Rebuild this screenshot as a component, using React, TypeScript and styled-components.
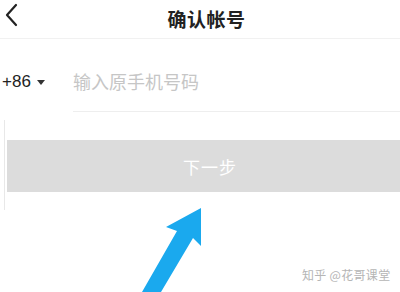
import styled, { createGlobalStyle } from 'styled-components';

const Global = createGlobalStyle`
  html, body {
    margin: 0;
    padding: 0;
    background: #fff;
    overflow: hidden;
  }
  body {
    font-family: "Noto Sans CJK SC", "Noto Sans", sans-serif;
  }
`;

const Page = styled.div`
  position: relative;
  width: 413px;
  height: 292px;
  overflow: hidden;
  background: #fff;
`;

const Header = styled.header`
  position: relative;
  height: 38px;
  display: flex;
  align-items: center;
  justify-content: center;
  border-bottom: 1px solid #f1f1f1;
`;

const Back = styled.button`
  position: absolute;
  left: 3px;
  top: 3px;
  border: 0;
  padding: 0;
  background: none;
  display: flex;
`;

const Title = styled.h1`
  margin: 0;
  margin-top: -2px;
  font-size: 19px;
  font-weight: 700;
  color: #222;
  letter-spacing: 0.5px;
`;

const PhoneRow = styled.div`
  height: 73px;
  display: flex;
  align-items: center;
  padding-top: 12px;
  box-sizing: border-box;
`;

const Code = styled.div`
  width: 73px;
  flex: none;
  display: flex;
  align-items: center;
  gap: 6px;
  padding-left: 2px;
  box-sizing: border-box;
  font-family: "Liberation Sans", Arial, sans-serif;
  font-size: 17px;
  color: #222;
`;

const Caret = styled.span`
  width: 0;
  height: 0;
  border-left: 4.5px solid transparent;
  border-right: 4.5px solid transparent;
  border-top: 5px solid #333;
  margin-top: 2px;
`;

const Field = styled.div`
  flex: 1;
  align-self: stretch;
  display: flex;
  align-items: center;
  border-bottom: 1px solid #eeeeee;
  font-size: 18px;
  color: #c6c6c6;
`;

const ButtonRow = styled.div`
  display: flex;
  padding-top: 22px;
  padding-left: 4px;
  gap: 2px;
`;

const Rail = styled.span`
  width: 1px;
  margin-top: -14px;
  height: 90px;
  background: #e8e8e8;
`;

const NextButton = styled.button`
  flex: 1;
  height: 52px;
  margin-top: 6px;
  border: 0;
  background: #dcdcdc;
  color: #fff;
  font-family: "Noto Sans CJK SC", sans-serif;
  font-size: 17px;
  letter-spacing: 1px;
`;

const Arrow = styled.svg`
  position: absolute;
  left: 0;
  top: 0;
  pointer-events: none;
`;

const Watermark = styled.div`
  position: absolute;
  left: 302px;
  top: 266px;
  font-size: 12px;
  letter-spacing: 0.3px;
  color: #b5b5b5;
  text-shadow: 0 0 1px #fff;
  white-space: nowrap;
`;

export default function App() {
  return (
    <Page>
      <Global />
      <Header>
        <Back aria-label="返回">
          <svg width="16" height="24" viewBox="0 0 16 24">
            <path d="M13 2 L4 12 L13 22" fill="none" stroke="#222" strokeWidth="2.2" strokeLinecap="round" strokeLinejoin="round" />
          </svg>
        </Back>
        <Title>确认帐号</Title>
      </Header>
      <PhoneRow>
        <Code>
          +86
          <Caret />
        </Code>
        <Field>输入原手机号码</Field>
      </PhoneRow>
      <ButtonRow>
        <Rail />
        <NextButton>下一步</NextButton>
      </ButtonRow>
      <Arrow width="413" height="292" viewBox="0 0 413 292">
        <polygon
          points="201,208 201,246 193,238 161,292 142,292 177,231 166,227"
          fill="#1aa9ee"
        />
      </Arrow>
      <Watermark>知乎 @花哥课堂</Watermark>
    </Page>
  );
}
